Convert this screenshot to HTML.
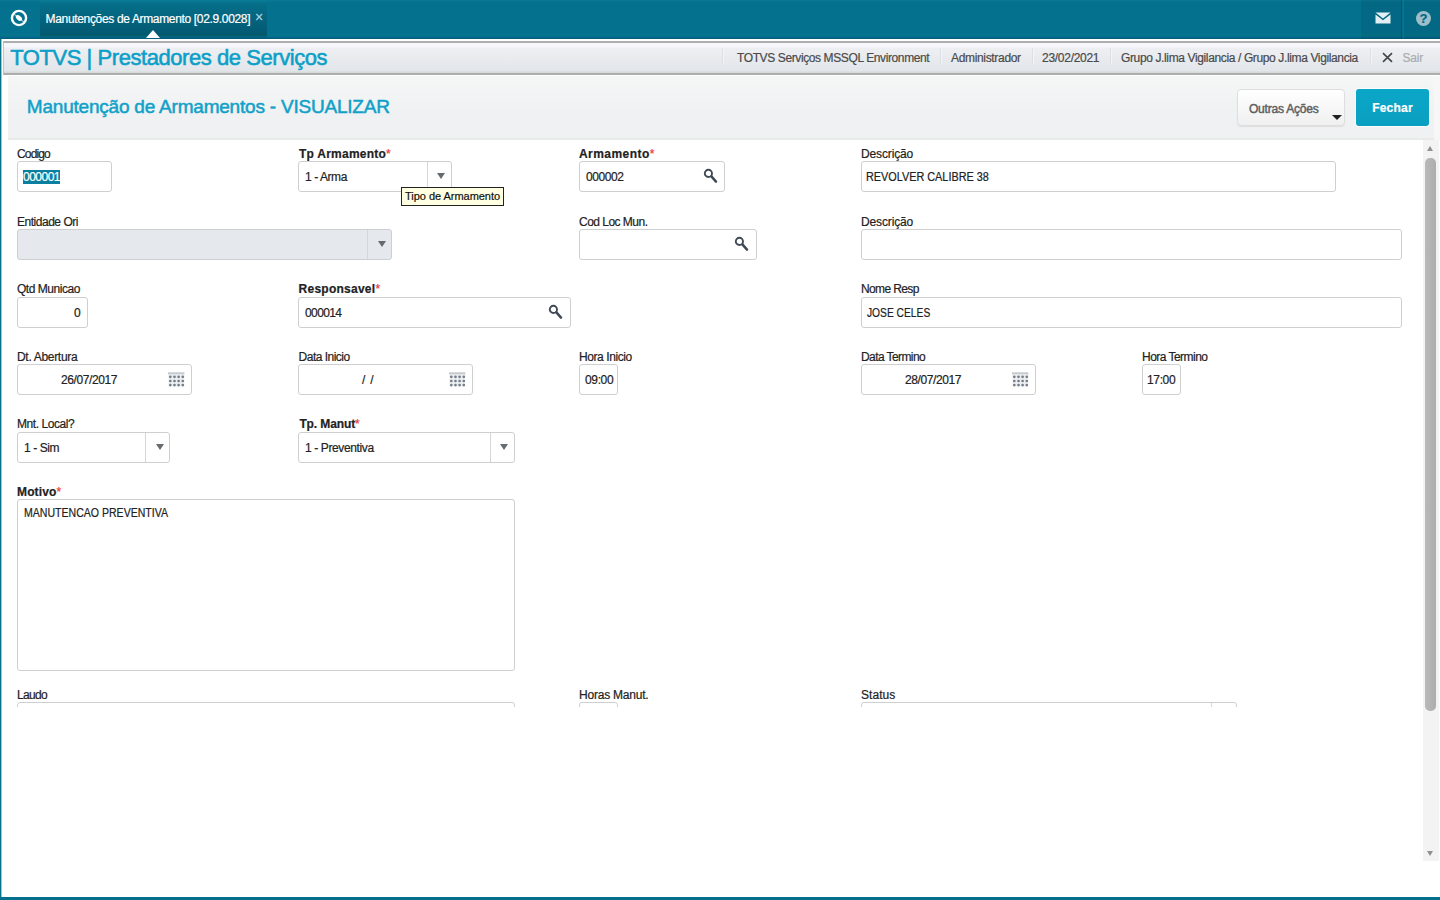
<!DOCTYPE html>
<html lang="pt-BR">
<head>
<meta charset="utf-8">
<title>Manutenção de Armamentos - VISUALIZAR</title>
<style>
*{box-sizing:border-box;margin:0;padding:0}
html,body{width:1440px;height:900px;overflow:hidden;background:#fff}
body{font-family:"Liberation Sans",Arial,sans-serif;font-size:12px;color:#222;position:relative;-webkit-text-stroke:0.2px}
.abs{position:absolute}
/* top bar */
#topbar{left:0;top:0;width:1440px;height:39px;background:linear-gradient(#0d7b97 0,#04718e 2px,#04718e 33px,#03768b 35px,#056c92 37px,#035a71 39px)}
#logo{left:0;top:0;width:40px;height:39px}
#tab{left:40px;top:0;width:227px;height:38px;background:linear-gradient(#0a7c96 0,#056e89 4px,#035a73 33px,#025a66 35px,#05678a 37px,#035a71 38px);color:#fff;font-size:12px;line-height:38px;padding-left:5px;white-space:nowrap}
#tab .x{position:absolute;left:215px;top:-2px;font-size:14px;color:#a8d6e3}
#tabarrow{left:145.5px;top:29.5px;width:0;height:0;border-left:7.5px solid transparent;border-right:7.5px solid transparent;border-bottom:8.5px solid #fff}
#mailbox{left:1361px;top:0;width:41px;height:39px;background:rgba(0,25,40,.10);border-right:1px solid rgba(0,30,45,.25)}
#helpbox{left:1403px;top:0;width:37px;height:39px;background:rgba(0,25,40,.10);border-left:1px solid rgba(255,255,255,.06)}
/* frame */
#leftborder{left:0;top:39px;width:2px;height:861px;background:linear-gradient(90deg,#057488 0,#057488 1px,#9cc7d0 1px)}
#bottomborder{left:0;top:897px;width:1440px;height:3px;background:#05708e}
/* second bar */
#bar2{left:3px;top:41px;width:1437px;border-left:1px solid #c4c7c9;height:34px;background:linear-gradient(#f7f7fb 0,#f7f7fb 4px,#eeeff2 5px,#e2e6ea 28px,#d4dad8 29px,#d4dad8 30px);border-top:2px solid #adaeae;border-bottom:2px solid #adadad}
#apptitle{left:9px;top:44px;font-size:22px;line-height:28px;-webkit-text-stroke:0.55px;color:#0c9fc8;white-space:nowrap}
.info{top:42px;height:33px;line-height:33px;font-size:12px;color:#4a4a4a;white-space:nowrap}
.sep{top:48px;width:1px;height:16px;background:#dde0e3;box-shadow:1px 0 0 #f3f4f7}
/* header */
#hdr{left:8px;top:76px;width:1426px;height:64px;background:linear-gradient(#f5f6f6,#f0f1f2 60%);border-bottom:2px solid #e9eaea;box-shadow:6px 0 0 #f7f7f7}
#pagetitle{left:28px;top:95px;font-size:19px;line-height:24px;-webkit-text-stroke:0.5px;color:#0fa1c9;white-space:nowrap}
#btn1{left:1237px;top:89px;width:108px;height:37px;border:1px solid #dedede;border-radius:4px;background:linear-gradient(#fff,#f0f0f0);font-size:12px;color:#606060;-webkit-text-stroke:0.45px;line-height:38px;padding-left:11px;box-shadow:0 1px 1px rgba(0,0,0,.08)}
#btn2{left:1356px;top:89px;width:73px;height:37px;border-radius:3px;background:linear-gradient(#0ba7c8,#0a9fc1);box-shadow:0 0 0 1px rgba(255,255,255,.7);color:#fff;font-weight:bold;font-size:12px;line-height:39px;text-align:center}
/* form */
.lbl{font-size:12px;line-height:14px;color:#222;white-space:nowrap}
.lbl b{font-weight:bold}
.lbl i{font-style:normal;color:#ee3535;font-weight:normal}
.inp{height:31px;border:1px solid #cdcfd1;border-radius:3px;background:#fff;font-size:12px;line-height:31px;color:#222;padding-left:5px;white-space:nowrap;overflow:hidden}
.dis{background:#e5e8ec}
.divd{position:absolute;top:0;width:1px;height:29px;background:#d4d6d8}
.arr{position:absolute;top:11px;width:0;height:0;border-left:4px solid transparent;border-right:4px solid transparent;border-top:6px solid #666b70}
.inp{position:absolute}
.sel{background:#0a7f9f;color:#fff;display:inline-block;height:14px;line-height:14px;vertical-align:middle;margin-top:-2px}
.mag{position:absolute;top:6px}
.cal{position:absolute;top:7px}
#tip{left:401px;top:187px;width:103px;height:19px;border:1px solid #222;background:#ffffe1;font-size:11px;line-height:16px;padding-left:3px;color:#111;white-space:nowrap}
#sbtrack{left:1423px;top:140px;width:16px;height:721px;background:#f3f3f3}
#sbthumb{left:1425px;top:158px;width:11px;height:553px;background:linear-gradient(90deg,#b9b9b9,#adadad);border-radius:5px}
.sbarr{width:0;height:0;border-left:4px solid transparent;border-right:4px solid transparent}
</style>
</head>
<body>
<div id="topbar" class="abs"></div>
<div id="logo" class="abs">
<svg width="40" height="39" viewBox="0 0 40 39"><circle cx="19" cy="18" r="7.1" fill="none" stroke="#fff" stroke-width="2.4"/><path d="M13.6 13.8 L24.2 22.2" stroke="#fff" stroke-opacity=".55" stroke-width="1.3"/><ellipse cx="18.9" cy="18" rx="3.5" ry="2.2" fill="#fff" transform="rotate(38 18.9 18)"/></svg>
</div>
<div id="tab" class="abs"><span id="h1" style="letter-spacing:-0.34px;margin-left:0.6px">Manutenções de Armamento [02.9.0028]</span><span class="x">×</span></div>
<div id="tabarrow" class="abs"></div>
<div id="mailbox" class="abs"><svg style="position:absolute;left:14px;top:12px" width="16" height="12" viewBox="0 0 16 12"><path d="M0.5 0.5 H15.5 L8 6.5 Z" fill="#e3eff3"/><path d="M0.5 2.5 L8 8.3 L15.5 2.5 V11.5 H0.5 Z" fill="#e3eff3"/></svg></div>
<div id="helpbox" class="abs"><div style="position:absolute;left:12px;top:10.5px;width:15px;height:15px;border-radius:50%;background:#9dbfc9;color:#046882;font-weight:bold;font-size:13px;line-height:16px;text-align:center">?</div></div>

<div id="leftborder" class="abs"></div>
<div id="bar2" class="abs"></div>
<div id="apptitle" class="abs"><span id="h2" style="letter-spacing:-0.44px;margin-left:1.2px">TOTVS | Prestadores de Serviços</span></div>
<div class="abs sep" style="left:722px"></div>
<div class="abs info" style="left:737px"><span id="h3" style="letter-spacing:-0.39px">TOTVS Serviços MSSQL Environment</span></div>
<div class="abs sep" style="left:940px"></div>
<div class="abs info" style="left:951px"><span id="h4" style="letter-spacing:-0.33px">Administrador</span></div>
<div class="abs sep" style="left:1032px"></div>
<div class="abs info" style="left:1042px"><span id="h5" style="letter-spacing:-0.28px">23/02/2021</span></div>
<div class="abs sep" style="left:1110px"></div>
<div class="abs info" style="left:1121px"><span id="h6" style="letter-spacing:-0.37px">Grupo J.lima Vigilancia / Grupo J.lima Vigilancia</span></div>
<div class="abs sep" style="left:1370px"></div>
<svg class="abs" style="left:1382px;top:52px" width="11" height="11" viewBox="0 0 11 11"><path d="M1 1.2 L10 9.8 M10 1.2 L1 9.8" stroke="#444" stroke-width="1.6" fill="none"/></svg>
<div class="abs info" style="left:1403px;color:#a9acae"><span id="h7" style="letter-spacing:-0.2px;margin-left:-0.6px">Sair</span></div>

<div id="hdr" class="abs"></div>
<div id="pagetitle" class="abs"><span id="h8" style="letter-spacing:-0.21px;margin-left:-1.2px">Manutenção de Armamentos - VISUALIZAR</span></div>
<div id="btn1" class="abs"><span id="h9" style="letter-spacing:-0.21px">Outras Ações</span></div>
<div class="abs" style="left:1332px;top:115px;width:0;height:0;border-left:5px solid transparent;border-right:5px solid transparent;border-top:5px solid #222"></div>
<div id="btn2" class="abs"><span id="h10" style="letter-spacing:0.23px">Fechar</span></div>

<div id="form" class="abs" style="left:0;top:139px;width:1420px;height:568px;overflow:hidden">
<!-- row 1 -->
<div class="abs lbl" style="left:17px;top:8px"><span id="l1" style="letter-spacing:-0.85px">Codigo</span></div>
<div class="abs inp" style="left:17px;top:22px;width:95px"><span class="sel"><span id="v1" style="letter-spacing:-0.5px">000001</span></span></div>
<div class="abs lbl" style="left:298px;top:8px"><b id="l2" style="letter-spacing:0.24px;margin-left:1.0px">Tp Armamento<i>*</i></b></div>
<div class="abs inp" style="left:298px;top:22px;width:154px;padding-left:6px"><span id="v2" style="letter-spacing:-0.43px">1 - Arma</span><div class="divd" style="left:128px"></div><div class="arr" style="left:138px"></div></div>
<div class="abs lbl" style="left:579px;top:8px"><b id="l3" style="letter-spacing:0.45px">Armamento<i>*</i></b></div>
<div class="abs inp" style="left:579px;top:22px;width:146px;padding-left:6px"><span id="v3" style="letter-spacing:-0.41px">000002</span><svg class="mag" style="left:123px" width="16" height="16" viewBox="0 0 16 16"><circle cx="5.4" cy="5.4" r="3.6" fill="none" stroke="#3f4a56" stroke-width="1.9"/><path d="M8.4 8.4 L13 13.6" stroke="#3f4a56" stroke-width="2.5" stroke-linecap="round"/></svg></div>
<div class="abs lbl" style="left:861px;top:8px"><span id="l4" style="letter-spacing:-0.14px">Descrição</span></div>
<div class="abs inp" style="left:861px;top:22px;width:475px;padding-left:5px"><span id="v4" style="display:inline-block;transform-origin:0 50%;transform:scaleX(0.904);margin-left:-1.0px">REVOLVER CALIBRE 38</span></div>
<!-- row 2 -->
<div class="abs lbl" style="left:17px;top:76px"><span id="l5" style="letter-spacing:-0.48px">Entidade Ori</span></div>
<div class="abs inp dis" style="left:17px;top:90px;width:375px"><div class="divd" style="left:349px"></div><div class="arr" style="left:360px"></div></div>
<div class="abs lbl" style="left:579px;top:76px"><span id="l6" style="letter-spacing:-0.52px">Cod Loc Mun.</span></div>
<div class="abs inp" style="left:579px;top:90px;width:178px"><svg class="mag" style="left:154px" width="16" height="16" viewBox="0 0 16 16"><circle cx="5.4" cy="5.4" r="3.6" fill="none" stroke="#3f4a56" stroke-width="1.9"/><path d="M8.4 8.4 L13 13.6" stroke="#3f4a56" stroke-width="2.5" stroke-linecap="round"/></svg></div>
<div class="abs lbl" style="left:861px;top:76px"><span id="l7" style="letter-spacing:-0.14px">Descrição</span></div>
<div class="abs inp" style="left:861px;top:90px;width:541px"></div>
<!-- row 3 -->
<div class="abs lbl" style="left:17px;top:143px"><span id="l8" style="letter-spacing:-0.46px">Qtd Municao</span></div>
<div class="abs inp" style="left:17px;top:158px;width:71px;padding-left:56px"><span id="v8" style="letter-spacing:0.0px">0</span></div>
<div class="abs lbl" style="left:298px;top:143px"><b id="l9" style="letter-spacing:0.25px;margin-left:0.6px">Responsavel<i>*</i></b></div>
<div class="abs inp" style="left:298px;top:158px;width:273px;padding-left:6px"><span id="v9" style="letter-spacing:-0.61px">000014</span><svg class="mag" style="left:249px" width="16" height="16" viewBox="0 0 16 16"><circle cx="5.4" cy="5.4" r="3.6" fill="none" stroke="#3f4a56" stroke-width="1.9"/><path d="M8.4 8.4 L13 13.6" stroke="#3f4a56" stroke-width="2.5" stroke-linecap="round"/></svg></div>
<div class="abs lbl" style="left:861px;top:143px"><span id="l10" style="letter-spacing:-0.62px">Nome Resp</span></div>
<div class="abs inp" style="left:861px;top:158px;width:541px;padding-left:5px"><span id="v10" style="display:inline-block;transform-origin:0 50%;transform:scaleX(0.854)">JOSE CELES</span></div>
<!-- row 4 -->
<div class="abs lbl" style="left:17px;top:211px"><span id="l11" style="letter-spacing:-0.31px">Dt. Abertura</span></div>
<div class="abs inp" style="left:17px;top:225px;width:175px;padding-left:43px"><span id="v11" style="letter-spacing:-0.4px">26/07/2017</span><svg class="cal" style="left:149.9px" width="17" height="15" viewBox="0 0 17 15"><rect x="0" y="0.3" width="16.4" height="2.3" fill="#c6cacf"/><rect x="0.4" y="2.6" width="15.8" height="12" fill="#eceff2"/><g fill="#767d87"><circle cx="2.3" cy="4.8" r="1.35"/><circle cx="6.5" cy="4.8" r="1.35"/><circle cx="10.6" cy="4.8" r="1.35"/><circle cx="14.8" cy="4.8" r="1.35"/><circle cx="2.3" cy="9" r="1.35"/><circle cx="6.5" cy="9" r="1.35"/><circle cx="10.6" cy="9" r="1.35"/><circle cx="14.8" cy="9" r="1.35"/><circle cx="2.3" cy="13.1" r="1.35"/><circle cx="6.5" cy="13.1" r="1.35"/><circle cx="10.6" cy="13.1" r="1.35"/><circle cx="14.8" cy="13.1" r="1.35"/></g></svg></div>
<div class="abs lbl" style="left:298px;top:211px"><span id="l12" style="letter-spacing:-0.52px;margin-left:0.6px">Data Inicio</span></div>
<div class="abs inp" style="left:298px;top:225px;width:175px;padding-left:63px"><span id="v12" style="letter-spacing:0.79px">/ /</span><svg class="cal" style="left:149.9px" width="17" height="15" viewBox="0 0 17 15"><rect x="0" y="0.3" width="16.4" height="2.3" fill="#c6cacf"/><rect x="0.4" y="2.6" width="15.8" height="12" fill="#eceff2"/><g fill="#767d87"><circle cx="2.3" cy="4.8" r="1.35"/><circle cx="6.5" cy="4.8" r="1.35"/><circle cx="10.6" cy="4.8" r="1.35"/><circle cx="14.8" cy="4.8" r="1.35"/><circle cx="2.3" cy="9" r="1.35"/><circle cx="6.5" cy="9" r="1.35"/><circle cx="10.6" cy="9" r="1.35"/><circle cx="14.8" cy="9" r="1.35"/><circle cx="2.3" cy="13.1" r="1.35"/><circle cx="6.5" cy="13.1" r="1.35"/><circle cx="10.6" cy="13.1" r="1.35"/><circle cx="14.8" cy="13.1" r="1.35"/></g></svg></div>
<div class="abs lbl" style="left:579px;top:211px"><span id="l13" style="letter-spacing:-0.42px">Hora Inicio</span></div>
<div class="abs inp" style="left:579px;top:225px;width:39px;padding-left:5px"><span id="v13" style="letter-spacing:-0.36px">09:00</span></div>
<div class="abs lbl" style="left:861px;top:211px"><span id="l14" style="letter-spacing:-0.59px">Data Termino</span></div>
<div class="abs inp" style="left:861px;top:225px;width:175px;padding-left:43px"><span id="v14" style="letter-spacing:-0.4px">28/07/2017</span><svg class="cal" style="left:149.9px" width="17" height="15" viewBox="0 0 17 15"><rect x="0" y="0.3" width="16.4" height="2.3" fill="#c6cacf"/><rect x="0.4" y="2.6" width="15.8" height="12" fill="#eceff2"/><g fill="#767d87"><circle cx="2.3" cy="4.8" r="1.35"/><circle cx="6.5" cy="4.8" r="1.35"/><circle cx="10.6" cy="4.8" r="1.35"/><circle cx="14.8" cy="4.8" r="1.35"/><circle cx="2.3" cy="9" r="1.35"/><circle cx="6.5" cy="9" r="1.35"/><circle cx="10.6" cy="9" r="1.35"/><circle cx="14.8" cy="9" r="1.35"/><circle cx="2.3" cy="13.1" r="1.35"/><circle cx="6.5" cy="13.1" r="1.35"/><circle cx="10.6" cy="13.1" r="1.35"/><circle cx="14.8" cy="13.1" r="1.35"/></g></svg></div>
<div class="abs lbl" style="left:1142px;top:211px"><span id="l15" style="letter-spacing:-0.53px">Hora Termino</span></div>
<div class="abs inp" style="left:1142px;top:225px;width:39px;padding-left:5px"><span id="v15" style="letter-spacing:-0.36px;margin-left:-1.0px">17:00</span></div>
<!-- row 5 -->
<div class="abs lbl" style="left:17px;top:278px"><span id="l16" style="letter-spacing:-0.44px">Mnt. Local?</span></div>
<div class="abs inp" style="left:17px;top:293px;width:153px;padding-left:6px"><span id="v16" style="letter-spacing:-0.42px">1 - Sim</span><div class="divd" style="left:127px"></div><div class="arr" style="left:138px"></div></div>
<div class="abs lbl" style="left:298px;top:278px"><b id="l17" style="letter-spacing:-0.11px;margin-left:1.4px">Tp. Manut<i>*</i></b></div>
<div class="abs inp" style="left:298px;top:293px;width:217px;padding-left:6px"><span id="v17" style="letter-spacing:-0.38px">1 - Preventiva</span><div class="divd" style="left:191px"></div><div class="arr" style="left:201px"></div></div>
<!-- row 6 -->
<div class="abs lbl" style="left:17px;top:346px"><b id="l18" style="letter-spacing:0.14px">Motivo<i>*</i></b></div>
<div class="abs inp" style="left:17px;top:360px;width:498px;height:172px;padding-left:6px;line-height:26px"><span id="v18" style="display:inline-block;transform-origin:0 50%;transform:scaleX(0.879)">MANUTENCAO PREVENTIVA</span></div>
<!-- row 7 -->
<div class="abs lbl" style="left:17px;top:549px"><span id="l19" style="letter-spacing:-0.66px">Laudo</span></div>
<div class="abs inp" style="left:17px;top:563px;width:498px"></div>
<div class="abs lbl" style="left:579px;top:549px"><span id="l20" style="letter-spacing:-0.22px">Horas Manut.</span></div>
<div class="abs inp" style="left:579px;top:563px;width:39px"></div>
<div class="abs lbl" style="left:861px;top:549px"><span id="l21" style="letter-spacing:0.05px">Status</span></div>
<div class="abs inp" style="left:861px;top:563px;width:376px"><div class="divd" style="left:349px"></div></div>

</div>

<div id="tip" class="abs"><span id="tp" style="letter-spacing:-0.03px">Tipo de Armamento</span></div>
<div id="sbtrack" class="abs"></div>
<div id="sbthumb" class="abs"></div>
<div class="abs sbarr" style="left:1427px;top:146px;border-left-width:3.5px;border-right-width:3.5px;border-bottom:5px solid #909090"></div>
<div class="abs sbarr" style="left:1427px;top:851px;border-left-width:3.5px;border-right-width:3.5px;border-top:5px solid #909090"></div>

<div id="bottomborder" class="abs"></div>
</body>
</html>
